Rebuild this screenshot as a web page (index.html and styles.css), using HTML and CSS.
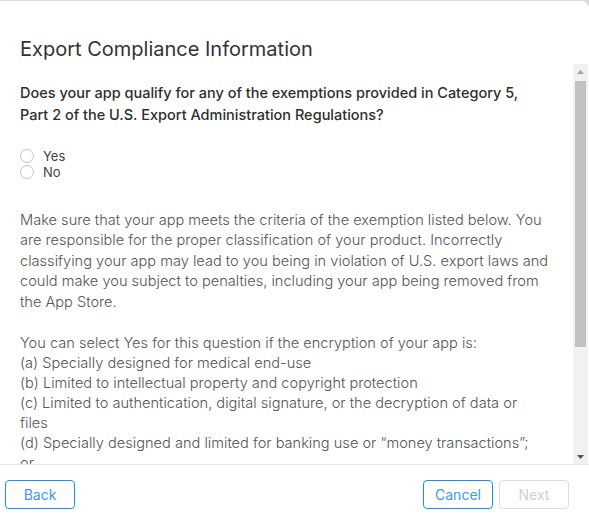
FILE: index.html
```html
<!DOCTYPE html>
<html>
<head>
<meta charset="utf-8">
<link rel="stylesheet" href="styles.css">
</head>
<body>
<div class="modal">
  <header class="header">
    <h1 class="title">Export Compliance Information</h1>
  </header>
  <div class="body">
    <div class="content">
      <p class="question">Does your app qualify for any of the exemptions provided in Category 5, Part 2 of the U.S. Export Administration Regulations?</p>
      <div class="radios">
        <label class="radio"><span class="circle"></span>Yes</label>
        <label class="radio"><span class="circle"></span>No</label>
      </div>
      <p class="para">Make sure that your app meets the criteria of the exemption listed below. You are responsible for the proper classification of your product. Incorrectly classifying your app may lead to you being in violation of U.S. export laws and could make you subject to penalties, including your app being removed from the App Store.</p>
      <p class="para second">You can select Yes for this question if the encryption of your app is:<br>(a) Specially designed for medical end-use<br>(b) Limited to intellectual property and copyright protection<br>(c) Limited to authentication, digital signature, or the decryption of data or files<br>(d) Specially designed and limited for banking use or “money transactions”; or<br>(e) Limited to “fixed” data compression or coding techniques</p>
    </div>
    <div class="scrollbar">
      <div class="arrow up"><svg width="7" height="4" viewBox="0 0 7 4"><path d="M0 4 L3.5 0 L7 4 Z" fill="#a3a3a3"/></svg></div>
      <div class="track"><div class="thumb"></div></div>
      <div class="arrow down"><svg width="7" height="4" viewBox="0 0 7 4"><path d="M0 0 L3.5 4 L7 0 Z" fill="#505050"/></svg></div>
    </div>
  </div>
  <footer class="footer">
    <button class="btn">Back</button>
    <div class="spacer"></div>
    <button class="btn">Cancel</button>
    <button class="btn disabled">Next</button>
  </footer>
</div>
</body>
</html>
```

FILE: styles.css
```css
* { box-sizing: border-box; }
html, body { margin: 0; padding: 0; }
body {
  background: #dcdcdc;
  width: 589px;
  height: 524px;
  overflow: hidden;
  font-family: Inter, "Liberation Sans", sans-serif;
}
.modal {
  margin-top: 1px;
  margin-left: -10px;
  width: 599px;
  height: 530px;
  background: #fff;
  border-radius: 0 8px 8px 0;
  display: flex;
  flex-direction: column;
}
.header {
  padding: 36px 20px 3px 30px;
  height: 63px;
}
.title {
  margin: 0;
  font-size: 20px;
  line-height: 24px;
  font-weight: 400;
  color: #333;
}
.body {
  display: flex;
  height: 400px;
  padding-left: 10px;
}
.content {
  flex: 1;
  overflow: hidden;
  padding: 18px 24px 0 20px;
  font-size: 14.6px;
}
.question {
  margin: 0;
  padding-right: 5px;
  font-size: 14.5px;
  font-weight: 500;
  line-height: 22px;
  color: #2e2e2e;
}
.radios {
  margin-top: 22px;
  display: flex;
  flex-direction: column;
}
.radio {
  display: flex;
  align-items: center;
  height: 16px;
  font-size: 13px;
  color: #444;
}
.circle {
  width: 14px;
  height: 14px;
  border: 1px solid #c4c4c4;
  border-radius: 50%;
  margin-right: 9px;
}
.para {
  margin: 30px 0 0;
  font-weight: 300;
  line-height: 20.4px;
  color: #555;
}
.para.second {
  margin-top: 20.5px;
  line-height: 20px;
  padding-right: 14px;
}
.scrollbar {
  width: 15px;
  margin-right: 1px;
  background: #f1f1f1;
  display: flex;
  flex-direction: column;
}
.arrow {
  height: 15px;
  display: flex;
  align-items: center;
  justify-content: center;
}
.track { flex: 1; }
.thumb {
  margin: 2px 2px 0;
  height: 266px;
  background: #c1c1c1;
}
.footer {
  border-top: 1px solid #e5e5e5;
  display: flex;
  align-items: flex-start;
  padding: 15px 20px 0 15px;
  gap: 6px;
}
.spacer { flex: 1; }
.btn {
  width: 70px;
  height: 29px;
  border: 1px solid #1a8cff;
  border-radius: 4px;
  background: #fff;
  color: #3d97f3;
  font-family: Inter, "Liberation Sans", sans-serif;
  font-size: 14px;
  padding: 0;
}
.btn.disabled {
  border-color: #dedede;
  color: #cfcfcf;
}
```
